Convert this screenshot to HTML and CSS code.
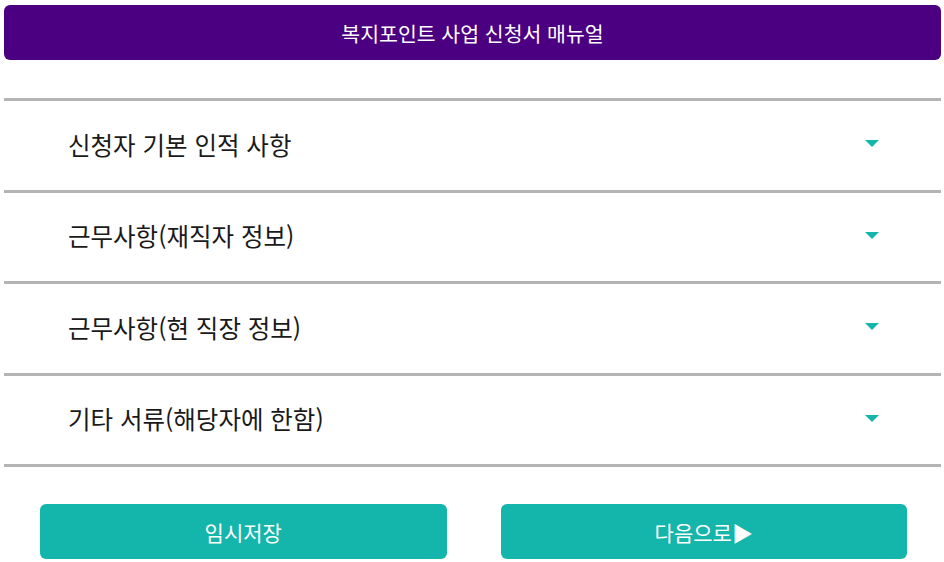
FILE: index.html
```html
<!DOCTYPE html>
<html lang="ko">
<head>
    <meta charset="UTF-8">
    <meta name="viewport" content="width=device-width, initial-scale=1.0">
    <title>복지포인트 사업 신청서 매뉴얼</title>
    <link rel="stylesheet" href="styles.css">
</head>
<body>

    <div class="container">
        <h1 class="title">복지포인트 사업 신청서 매뉴얼</h1>

        <div class="sections">
            <div class="section">
                <span class="section-name">신청자 기본 인적 사항</span>
                <span class="arrow"></span>
            </div>
            <div class="section">
                <span class="section-name">근무사항(재직자 정보)</span>
                <span class="arrow"></span>
            </div>
            <div class="section">
                <span class="section-name">근무사항(현 직장 정보)</span>
                <span class="arrow"></span>
            </div>
            <div class="section">
                <span class="section-name">기타 서류(해당자에 한함)</span>
                <span class="arrow"></span>
            </div>
        </div>

        <div class="buttons">
            <button class="btn">임시저장</button>
            <button class="btn">다음으로▶</button>
        </div>
    </div>

</body>
</html>
```

FILE: styles.css
```css
body {
    margin: 0;
    padding: 0;
    font-family: 'Noto Sans CJK KR', 'Noto Sans', sans-serif;
    color: #1a1a1a;
    background: #fff;
}

.container {
    padding: 5px 3px 0 4px;
}

.title {
    margin: 0;
    height: 55px;
    display: flex;
    align-items: center;
    justify-content: center;
    background-color: #4b0082; /* Indigo */
    border-radius: 6px;
    color: #fff;
    font-size: 20.5px;
    font-weight: 400;
}

.sections {
    margin-top: 38px;
    border-bottom: 3px solid #b4b4b4;
}

.section {
    height: 88.5px;
    border-top: 3px solid #b4b4b4;
    display: flex;
    align-items: center;
    justify-content: space-between;
    padding: 0 62px 0 64px;
}

.section-name {
    font-size: 24.5px;
    margin-top: -2px;
}

/* Teal dropdown triangle */
.arrow {
    width: 0;
    height: 0;
    border-left: 7px solid transparent;
    border-right: 7px solid transparent;
    border-top: 7px solid #14b5ab;
    margin-top: -3px;
}

.buttons {
    display: flex;
    gap: 54px;
    margin-top: 37px;
    padding: 0 34px 0 36px;
}

.btn {
    flex: 1;
    height: 55px;
    border: none;
    border-radius: 6px;
    background-color: #14b5ab;
    color: #fff;
    font-family: inherit;
    font-size: 21px;
    cursor: pointer;
}
```
